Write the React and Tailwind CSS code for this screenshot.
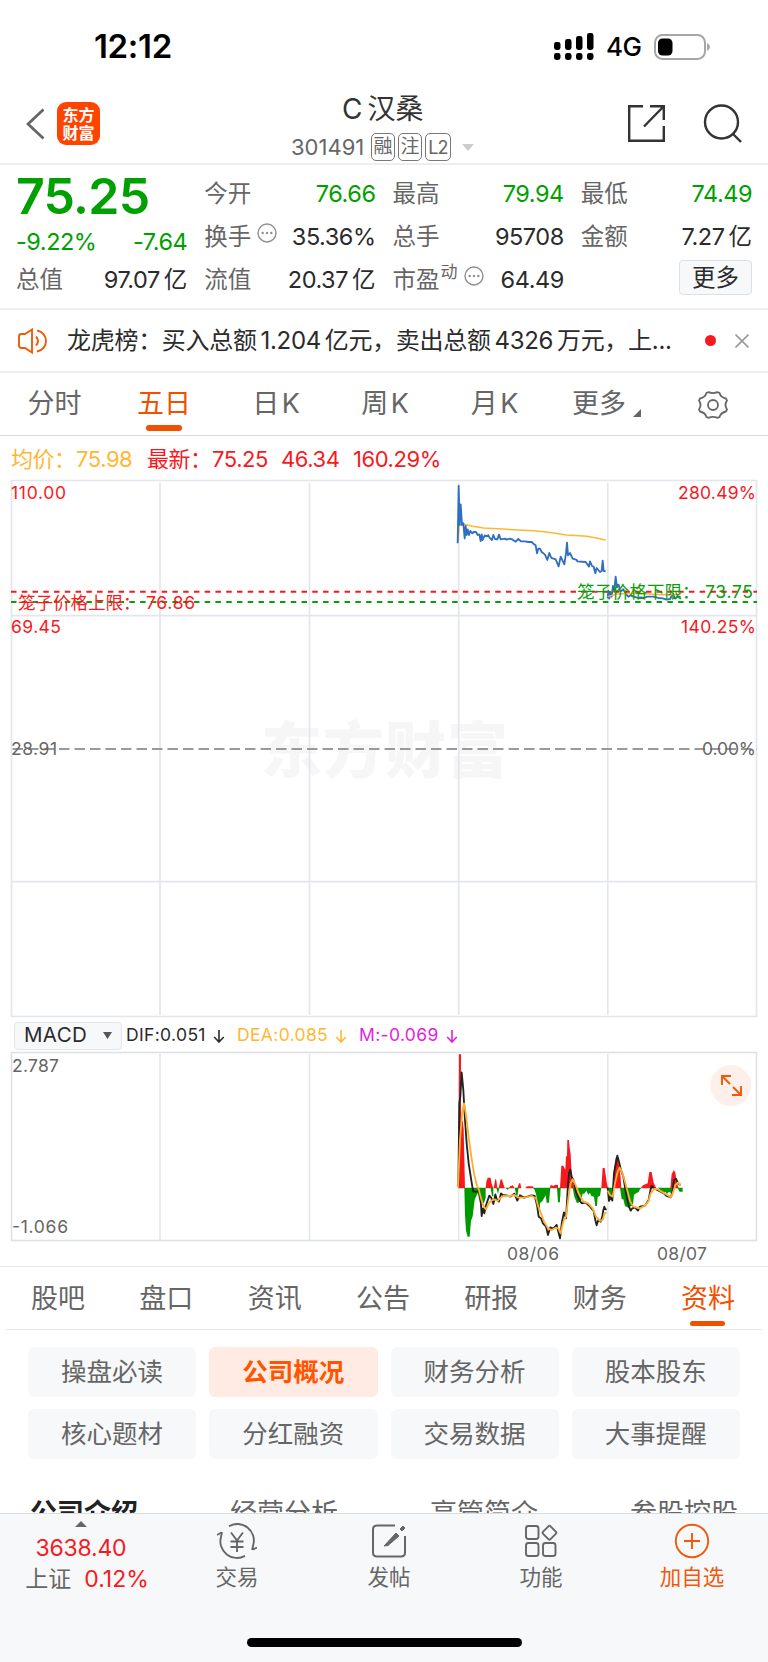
import React from 'react';
import clsx from 'clsx';

const periods = [
  { label: '分时', width: 'w-[109px]' },
  { label: '五日', width: 'w-[110px]', active: true },
  { label: '日 K', width: 'w-[114px]' },
  { label: '周 K', width: 'w-[104px]' },
  { label: '月 K', width: 'w-[115px]' },
];

const sections = ['股吧', '盘口', '资讯', '公告', '研报', '财务', '资料'];

const topics = ['操盘必读', '公司概况', '财务分析', '股本股东', '核心题材', '分红融资', '交易数据', '大事提醒'];

const subTabs = ['公司介绍', '经营分析', '高管简介', '参股控股'];

const priceDay1 =
  '53,220 56,48 59,165 62,103 66,165 70,160 74,205 77,168 80,195 83,178 87,195 91,183 97,190 101,186 108,186 113,195 118,193 122,213 125,193 128,210 134,196 139,199 145,196 150,205 156,210 160,195 165,207 172,208 177,194 182,208 195,206 200,209 210,206 218,209 227,215 235,207 243,214 255,214 265,216 275,216 280,221 287,226 291,250 295,236 300,236 305,246 315,254 322,270 328,249 334,264 347,268 356,289 362,260 366,268 373,283 378,250 381,218 384,256 390,249 398,266 410,270 412,274 437,276 447,290 450,274 456,288 461,290 466,310 470,294 480,306 485,303 488,272 491,303 497,304';
const priceDay2 =
  '503,385 505,362 508,386 511,366 515,380 519,348 523,360 527,320 531,352 536,344 541,365 550,358 556,370 565,380 572,376 580,380 595,384 603,382 612,384 622,380 640,380 655,384 668,385 680,389 690,387 695,378 700,372 706,386 712,380 722,381';

function More({ className }) {
  return (
    <svg viewBox="0 0 20 20" className={clsx('size-5', className)} fill="none" stroke="#8f8f8f" strokeWidth="1.4">
      <circle cx="10" cy="10" r="9" />
      <g fill="#8f8f8f" stroke="none">
        <circle cx="5.7" cy="10" r="1.2" />
        <circle cx="10" cy="10" r="1.2" />
        <circle cx="14.3" cy="10" r="1.2" />
      </g>
    </svg>
  );
}

function Stat({ label, value, unit, green, children }) {
  return (
    <div className="flex h-[43px] items-center justify-between">
      <span className="flex items-center text-[#666]">
        {label}
        {children}
      </span>
      <span className={clsx('flex gap-1', green ? 'text-[#00a000]' : 'text-[#2b2b2b]')}>
        <span className="tracking-[-0.02em]">{value}</span>
        {unit && <span>{unit}</span>}
      </span>
    </div>
  );
}

function StatusBar() {
  return (
    <div className="flex h-[92px] shrink-0 items-center pt-px pr-[58px] pl-[94px]">
      <span className="text-[33px] font-semibold tracking-[-0.01em]">12:12</span>
      <svg viewBox="0 0 40 28" className="ml-auto h-7 w-10">
        <rect x="0" y="9" width="6.5" height="8" rx="2.4" />
        <rect x="11" y="6" width="6.5" height="11" rx="2.4" />
        <rect x="22" y="3" width="6.5" height="14" rx="2.4" />
        <rect x="33" y="0" width="6.5" height="17" rx="2.4" />
        <rect x="0" y="20" width="6.5" height="7" rx="2.4" />
        <rect x="11" y="20" width="6.5" height="7" rx="2.4" />
        <rect x="22" y="20" width="6.5" height="7" rx="2.4" />
        <rect x="33" y="20" width="6.5" height="7" rx="2.4" />
      </svg>
      <span className="ml-3 w-[36px] text-[26px] font-medium tracking-[-0.02em]">4G</span>
      <svg viewBox="0 0 56 28" className="ml-3 h-7 w-14">
        <rect x="1" y="2" width="50" height="24" rx="7.5" fill="none" stroke="#a6a6a6" strokeWidth="2" />
        <rect x="4" y="5.5" width="14.5" height="17" rx="4.5" />
        <path d="M53 10q3 1.5 3 4t-3 4z" fill="#a6a6a6" />
      </svg>
    </div>
  );
}

function Header() {
  return (
    <div className="flex h-[73px] shrink-0 items-start border-b-2 border-[#eee] pr-[25px] pl-[26px]">
      <svg viewBox="0 0 20 32" className="mt-4 h-8 w-5" fill="none" stroke="#666" strokeWidth="2.8">
        <path d="M17.5 1.5 2 16l15.5 14.5" />
      </svg>
      <div className="mt-[10px] ml-[11px] flex size-[43px] flex-col items-center justify-center rounded-[9px] bg-[#ff4400] text-[16px] leading-[18px] font-bold text-white">
        <span>东方</span>
        <span>财富</span>
      </div>
      <div className="ml-[191px] flex w-[183px] flex-col">
        <h1 className="flex h-[34px] items-center gap-[5px] pl-[51px] text-[28px] text-[#333]">
          <span>C</span>
          <span>汉桑</span>
        </h1>
        <div className="mt-[7px] flex h-7 items-center gap-[3px] text-[22px] text-[#666]">
          <span className="w-[77px]">301491</span>
          <span className="flex h-7 w-6 items-center justify-center rounded-[5px] border border-[#777] text-[19px]">融</span>
          <span className="flex h-7 w-6 items-center justify-center rounded-[5px] border border-[#777] text-[19px]">注</span>
          <span className="flex h-7 w-[26px] items-center justify-center rounded-[5px] border border-[#777] text-[18px] tracking-[-0.04em]">L2</span>
          <svg viewBox="0 0 12 7" className="ml-2 h-[7px] w-3 shrink-0" fill="#ccc">
            <path d="M0 0h12L6 7z" />
          </svg>
        </div>
      </div>
      <svg viewBox="0 0 40 40" className="mt-3 ml-auto size-10" fill="none" stroke="#333" strokeWidth="2.4">
        <path d="M17 2.2H3.200v34.600h34.600V22M24 2.200h13.800V16M37.500 2.500 18 22.500" />
      </svg>
      <svg viewBox="0 0 40 40" className="mt-3 ml-[37px] size-10" fill="none" stroke="#333" strokeWidth="2.4">
        <circle cx="18.5" cy="18" r="16.5" />
        <path d="m30 30 8 8" />
      </svg>
    </div>
  );
}

function Quote() {
  return (
    <div className="grid h-[145px] shrink-0 grid-cols-4 gap-x-[17px] border-b-2 border-[#eee] px-4 pt-[7px] text-[23.5px] leading-none">
      <div>
        <div className="flex h-[48px] items-center text-[50px] font-semibold tracking-[-0.015em] text-[#00a000]">75.25</div>
        <div className="flex h-[38px] items-center justify-between pt-[6px] tracking-[-0.02em] text-[#00a000]">
          <span>-9.22%</span>
          <span>-7.64</span>
        </div>
        <Stat label="总值" value="97.07" unit="亿" />
      </div>
      <div>
        <Stat label="今开" value="76.66" green />
        <Stat label="换手" value="35.36%">
          <More className="-mt-2 ml-1.5" />
        </Stat>
        <Stat label="流值" value="20.37" unit="亿" />
      </div>
      <div>
        <Stat label="最高" value="79.94" green />
        <Stat label="总手" value="95708" />
        <Stat label="市盈" value="64.49">
          <span className="-mt-3.5 ml-px text-[17px]">动</span>
          <More className="-mt-2 ml-1.5" />
        </Stat>
      </div>
      <div>
        <Stat label="最低" value="74.49" green />
        <Stat label="金额" value="7.27" unit="亿" />
        <button className="mt-0.5 ml-auto flex h-[35px] w-[73px] items-center justify-center rounded-[4px] border border-[#dcdfe8] bg-[#f7f8fa] text-[#2b2b2b]">更多</button>
      </div>
    </div>
  );
}

function News() {
  return (
    <div className="flex h-[63px] shrink-0 items-center border-b-2 border-[#eee] pr-[19px] pl-[18px]">
      <svg viewBox="0 0 30 26" className="h-[26px] w-[30px]" fill="none" stroke="#f05a0a" strokeWidth="1.9">
        <path d="M14 1.500v23L7 20H3.500Q1 20 1 17.500v-9Q1 6 3.500 6H7zM18 8.500q4 4.500 0 9M19 2.500c12 2 12 19 0 21" />
      </svg>
      <p className="ml-[19px] w-[605px] text-[24px] tracking-[-0.012em] whitespace-nowrap text-[#2b2b2b] [word-spacing:-2.7px]">
        龙虎榜：买入总额 1.204 亿元，卖出总额 4326 万元，上...
      </p>
      <span className="ml-auto size-[11px] rounded-full bg-[#f8191e]" />
      <svg viewBox="0 0 14 14" className="ml-[19px] size-3.5" stroke="#999" strokeWidth="1.6">
        <path d="m.5.5 13 13m0-13-13 13" />
      </svg>
    </div>
  );
}

function Periods() {
  return (
    <div className="flex h-[63px] shrink-0 border-b border-[#d9dbe0] text-[27px] text-[#666] [word-spacing:-5px]">
      {periods.map(({ label, width, active }) => (
        <div key={label} className={clsx('flex flex-col items-center', width, active && 'text-[#f05000]')}>
          <span className="flex h-[52px] items-center pt-[11px]">{label}</span>
          {active && <span className="h-1.5 w-9 rounded-full bg-[#f05000]" />}
        </div>
      ))}
      <div className="flex h-[52px] items-center pt-[11px] pl-5">
        <span>更多</span>
        <svg viewBox="0 0 8 8" className="mt-4 ml-[7px] size-2" fill="#666">
          <path d="M8 0v8H0z" />
        </svg>
      </div>
      <svg viewBox="0 0 30 30" className="mt-[17px] mr-[40px] ml-auto size-[30px]" fill="none" stroke="#666" strokeWidth="1.8">
        <circle cx="15" cy="15" r="5" />
        <path d="M10.500 2.200q4.500 1.800 9 0l2 .8q1.300 4.500 6.500 5.500l1 2q-3 4.500 0 9l-1 2q-5 1-6.500 5.500l-2 .8q-4.500-1.800-9 0l-2-.8Q7 22.500 2 21.500l-1-2q3-4.500 0-9l1-2Q7 7.500 8.500 3z" />
      </svg>
    </div>
  );
}

function Legend() {
  return (
    <div className="flex h-[43px] shrink-0 items-center pt-[3px] pl-[11px] text-[22px] tracking-[-0.02em] whitespace-nowrap text-[#f8191e]">
      <span className="w-[65px] text-[#ffb733]">均价：</span>
      <span className="w-[71px] text-[#ffb733]">75.98</span>
      <span className="w-[65px]">最新：</span>
      <span className="w-[69px]">75.25</span>
      <span className="w-[72px]">46.34</span>
      <span>160.29%</span>
    </div>
  );
}

function PriceChart() {
  return (
    <svg viewBox="0 479 768 540" className="block h-[540px] w-[768px] shrink-0" fontSize="17.5">
      <text x="261" y="773" fontSize="61" fontWeight="900" fill="#f6f6f6" textLength="247">东方财富</text>
      <g fill="none" stroke="#e4e6ee" strokeWidth="1.7">
        <path d="M11.500 480.500h745v536h-745z" />
        <path d="M160 483v532M309.500 483v532M458.700 483v532M607.800 483v532M11 615.700h745M11 881.700h745" />
      </g>
      <path d="M11 749h746" stroke="#999" strokeWidth="2" strokeDasharray="10.5 5" strokeDashoffset="-1.5" />
      <g fill="none" strokeWidth="4.5" strokeLinejoin="round" transform="translate(440 470) scale(.3333)">
        <polyline stroke="#ffb733" points="54,215 58,165 70,162 90,167 130,174 200,178 280,182 320,186 380,195 440,199 465,203 497,210" />
        <polyline stroke="#2e6fc4" strokeWidth="5.5" points={priceDay1} />
        <polyline stroke="#2e6fc4" strokeWidth="5.5" points={priceDay2} />
        <polyline stroke="#ffb733" points="503,380 530,372 600,370 660,374 722,374" />
      </g>
      <g fill="none" strokeWidth="1.9" strokeDasharray="5.5 5.26">
        <path d="M11 591.700h746" stroke="#f8191e" />
        <path d="M11 602h746" stroke="#0a9f0a" />
      </g>
      <g fill="#f8191e">
        <text x="11" y="498.5" textLength="55">110.00</text>
        <text x="678" y="498.5" textLength="78">280.49%</text>
        <text x="11" y="632.5" textLength="50">69.45</text>
        <text x="681" y="632.5" textLength="75">140.25%</text>
        <text x="18" y="609">笼子价格上限：</text>
        <text x="146" y="609" textLength="49">76.86</text>
      </g>
      <g fill="#0a9f0a">
        <text x="577" y="598">笼子价格下限：</text>
        <text x="705" y="598" textLength="48">73.75</text>
      </g>
      <g fill="#666">
        <text x="11" y="755" textLength="46">28.91</text>
        <text x="702" y="755" textLength="54">0.00%</text>
      </g>
    </svg>
  );
}

function DownArrow({ className }) {
  return (
    <svg viewBox="0 0 12 14" className={clsx('h-3.5 w-3', className)} fill="none" stroke="currentColor" strokeWidth="1.6">
      <path d="M6 1v12M1.200 8 6 13l4.800-5" />
    </svg>
  );
}

function MacdBar() {
  return (
    <div className="flex h-[32px] shrink-0 items-center pt-px pl-[14px] text-[17.5px] tracking-[0.02em]">
      <div className="flex h-7 w-[108px] items-center rounded-[4px] border border-[#e3e5ea] bg-[#f7f8fa] pl-[9px] text-[20.5px] text-[#2b2b2b]">
        <span className="w-[70px]">MACD</span>
        <svg viewBox="0 0 9 7" className="ml-[9px] h-[7px] w-[9px]" fill="#555">
          <path d="M0 0h9L4.500 7z" />
        </svg>
      </div>
      <span className="ml-1 w-[87px] text-[#2b2b2b]">DIF:0.051</span>
      <DownArrow className="text-[#2b2b2b]" />
      <span className="ml-3 w-[98px] text-[#ffb733]">DEA:0.085</span>
      <DownArrow className="text-[#ffb733]" />
      <span className="ml-3 w-[87px] text-[#e01ee0]">M:-0.069</span>
      <DownArrow className="text-[#e01ee0]" />
    </div>
  );
}

function MacdChart() {
  return (
    <svg viewBox="0 1051 768 215" className="block h-[215px] w-[768px] shrink-0" fontSize="17.5">
      <g fill="none" stroke="#dcdfe6" strokeWidth="1.5">
        <path d="M11.500 1052.500h745v188h-745z" />
        <path stroke="#e4e6ee" d="M160 1054v186M309.500 1054v186M458.700 1054v186M607.800 1054v186" />
      </g>
      <g transform="translate(440 1040) scale(.3333)">
        <path
          fill="#f8191e"
          d="M55 445 57 43h6v200h5v-5l3 30 4 177zM137 445l2-20 4-12h9l3 18 5 14zM161 445l5-29 3 5 3 24zM176 445l6-28 4 2 7 22 2 4zM205 445l6-6 8-3 5 9zM232 445l5-15 4 0 3 15zM256 445l5-6h17l4 6zM329 445l3-10 8 2 8-3 6 1v10zM360 445l4-68h6l6 12 2-40h3l1-49h5l2 22 3 20 3 62 5 30 4 11zM484 445l4-61h6l6 42 4 19zM518 445l4-62 5-30 6-7 5 37 4 28 2 34zM602 445l7-9 14-6 5-34h7l6 32 8 17zM691 445l4-42 6-12 5 6 4 28 6 20z"
        />
        <path
          fill="#009a00"
          d="M73 443h64v30l-5 16h-12l-7-30-9 20-6 50-5 14-4 47h-6l-5-18-3-47zM152 443h8v26h-4zM169 443h9l-4 20zM195 443h12l-3 7zM224 443h12l-5 33zM240 443h120v44h-6l-3-44h-20l-4 45h-7l-3-22-10 18-7 5v17h-7l-4-40-5-16-5-7zM354 443h8l-1 30zM397 443h87l-4 24-7 4-2 27h-5l-4-28-8-2-4-10-5 6-6-12-7 10-4-2-3 18-6 8-8 4-8-20-5-27zM502 443h18l-4 36h-9zM540 443h64l-6 8-2 6-5 1-9 6-3 31-14 8-10-5-5-20-5 0zM654 443h44l-4 16-8-3-5 6-5-7-7 4zM712 443h16v12h-9z"
        />
        <g fill="none" strokeWidth="5.5" strokeLinejoin="round">
          <polyline
            stroke="#222"
            points="55,440 58,190 61,170 65,97 70,150 75,240 80,310 86,370 93,415 97,440 100,455 118,455 122,480 125,528 129,505 133,520 139,493 148,467 153,472 160,492 166,463 171,480 177,485 183,460 188,465 200,466 212,470 223,461 232,482 240,466 252,473 262,470 275,466 284,468 291,495 296,530 303,535 309,550 318,560 324,585 331,562 340,566 350,555 360,595 366,545 372,517 378,535 383,450 387,400 391,388 395,410 400,420 408,455 417,478 425,490 437,488 450,500 461,513 466,540 470,556 475,540 482,545 487,530 490,510 493,500 496,508 500,508"
          />
          <polyline
            stroke="#222"
            points="503,443 507,483 512,470 517,482 522,400 527,375 532,347 537,365 543,390 550,410 556,448 562,480 567,500 572,512 577,505 585,502 594,512 600,500 615,497 626,480 631,452 635,438 642,445 652,450 662,455 672,460 680,468 693,472 698,450 702,420 708,416 714,430 722,435"
          />
          <polyline
            stroke="#ffae2e"
            points="54,443 60,300 67,215 72,190 78,225 87,300 94,350 102,400 110,435 117,450 123,475 131,500 138,508 146,490 154,482 164,478 173,483 180,475 190,468 210,468 223,465 236,473 255,473 275,468 288,475 295,500 303,520 312,545 324,565 335,570 348,563 355,565 362,580 370,545 378,530 385,475 392,430 398,418 407,435 416,460 430,485 445,490 458,505 468,530 480,543 488,540 494,520 500,517"
          />
          <polyline
            stroke="#ffae2e"
            points="503,452 510,465 518,470 525,430 533,395 539,383 546,395 555,425 563,455 571,485 580,500 600,505 615,497 625,485 632,460 642,447 652,447 665,455 682,465 693,472 700,455 706,435 714,428 722,435"
          />
        </g>
      </g>
      <circle cx="730.7" cy="1085.5" r="20.5" fill="#fdf0ea" />
      <path d="M722 1085v-9h9m-9 0 8 8M741 1086v9h-9m9 0-8-8" fill="none" stroke="#f05a0a" strokeWidth="1.9" />
      <g fill="#666">
        <text x="12" y="1071.5" textLength="47">2.787</text>
        <text x="12" y="1233" textLength="56">-1.066</text>
        <text x="507" y="1260" textLength="52">08/06</text>
        <text x="657" y="1260" textLength="50">08/07</text>
      </g>
    </svg>
  );
}

function Sections() {
  return (
    <div className="shrink-0 border-t border-[#e6e8ee]">
      <div className="mx-1.5 flex h-[63px] justify-between border-b border-[#e6e8ee] pr-[27px] pl-[25px] text-[27px] text-[#666]">
        {sections.map((name) => (
          <div key={name} className={clsx('flex flex-col items-center', name === '资料' && 'text-[#f05000]')}>
            <span className="flex h-[54px] items-center pt-[11px]">{name}</span>
            {name === '资料' && <span className="h-[5px] w-[35px] rounded-full bg-[#f05000]" />}
          </div>
        ))}
      </div>
      <div className="grid grid-cols-4 gap-x-[13px] gap-y-3 px-7 pt-[17px] text-[25.5px] text-[#666]">
        {topics.map((name) => (
          <div
            key={name}
            className={clsx(
              'flex h-[50px] items-center justify-center rounded-md pt-px',
              name === '公司概况' ? 'bg-[#ffebe3] font-bold text-[#ff5500]' : 'bg-[#f7f8fa]',
            )}
          >
            {name}
          </div>
        ))}
      </div>
      <div className="mt-9 flex h-[18px] justify-between overflow-hidden px-[30px] text-[27px] leading-[38px] text-[#666]">
        {subTabs.map((name, i) => (
          <span key={name} className={clsx(i === 0 && 'font-bold text-[#222]')}>{name}</span>
        ))}
      </div>
    </div>
  );
}

function BottomBar() {
  return (
    <div className="h-[149px] shrink-0 border-t border-[#d9dce1] bg-[#f7f8fa] text-[21.5px] text-[#666]">
      <div className="flex h-[83px]">
        <div className="flex w-[162px] flex-col items-center pt-[7px] text-[23px] leading-[31px]">
          <svg viewBox="0 0 12 6" className="h-1.5 w-3" fill="#666">
            <path d="M6 0l6 6H0z" />
          </svg>
          <span className="mt-[6px] tracking-[-0.01em] text-[#f8191e]">3638.40</span>
          <span className="flex gap-[13px] pl-3">
            上证 <span className="text-[#f8191e]">0.12%</span>
          </span>
        </div>
        <div className="flex w-[150px] flex-col items-center pt-[9px]">
          <svg viewBox="0 0 40 36" className="h-9 w-10" fill="none" stroke="#666" strokeWidth="1.9">
            <path d="M12 3.200A16.500 16.500 0 0 1 36.200 22l-1 5M36 26.500l4-2M28 32.800A16.500 16.500 0 0 1 4 14l1-5M4.500 9.500 0 12M14 9.500l6 8 6-8M13.500 18.500h13M13.500 24h13M20 17.500V29" />
          </svg>
          <span className="mt-0.5">交易</span>
        </div>
        <div className="flex w-[154px] flex-col items-center pt-[9px]">
          <svg viewBox="0 0 36 36" className="size-9" fill="none" stroke="#666" strokeWidth="2">
            <path d="M24 2.500H6Q2 2.500 2 6.500v23q0 4 4 4h24q4 0 4-4V13" />
            <path d="m13 23 12-13 3 3-11 9.500zM29 6l3-3 2 2-3 3z" fill="#666" strokeWidth="1" />
          </svg>
          <span className="mt-0.5">发帖</span>
        </div>
        <div className="flex w-[150px] flex-col items-center pt-[9px]">
          <svg viewBox="0 0 36 36" className="size-9" fill="none" stroke="#666" strokeWidth="1.9">
            <rect x="3" y="3" width="12.5" height="13" rx="2.5" />
            <rect x="3" y="20" width="12.5" height="13" rx="2.5" />
            <rect x="20" y="20" width="12.5" height="13" rx="2.5" />
            <rect x="21.2" y="4.5" width="10.5" height="10.5" rx="1.5" transform="rotate(45 26.45 9.75)" />
          </svg>
          <span className="mt-0.5">功能</span>
        </div>
        <div className="flex w-[152px] flex-col items-center pt-[9px] text-[#f05a0a]">
          <svg viewBox="0 0 36 36" className="size-9" fill="none" stroke="currentColor" strokeWidth="1.9">
            <circle cx="18" cy="18" r="16.2" />
            <path d="M18 10v16M10 18h16" />
          </svg>
          <span className="mt-0.5">加自选</span>
        </div>
      </div>
      <div className="mx-auto mt-[41px] h-[9px] w-[275px] rounded-full bg-black" />
    </div>
  );
}

export default function App() {
  return (
    <div className="flex h-[1662px] w-[768px] flex-col overflow-hidden bg-white font-[Inter,'Noto_Sans_CJK_SC',sans-serif] text-black">
      <StatusBar />
      <Header />
      <Quote />
      <News />
      <Periods />
      <Legend />
      <PriceChart />
      <MacdBar />
      <MacdChart />
      <Sections />
      <BottomBar />
    </div>
  );
}
